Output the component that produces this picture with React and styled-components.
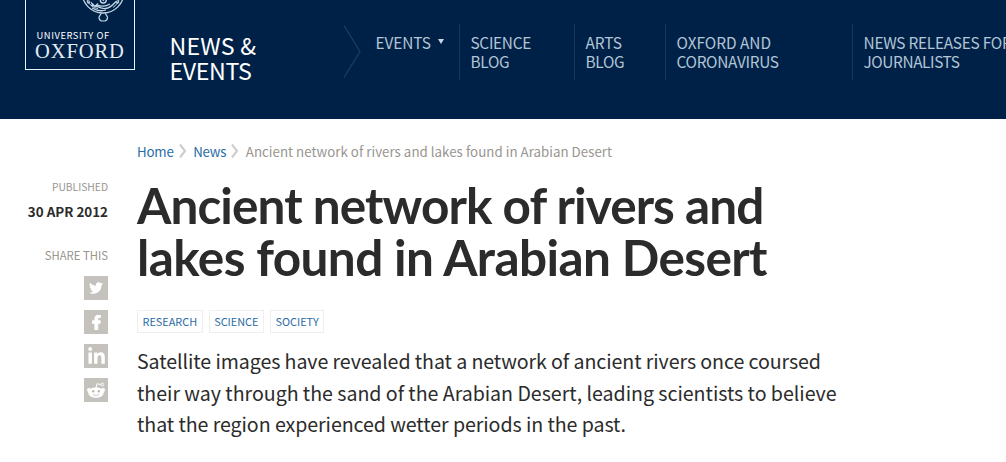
import React from 'react';
import styled, { createGlobalStyle } from 'styled-components';
import { FaTwitter, FaFacebookF, FaLinkedinIn } from 'react-icons/fa';

const Global = createGlobalStyle`
  *, *::before, *::after { box-sizing: border-box; }
  html, body { margin: 0; padding: 0; background: #fff; overflow: hidden; }
  body {
    font-family: "Noto Sans CJK JP", "Open Sans", sans-serif;
    color: #2b2b2b;
  }
  h1, h2, p { margin: 0; padding: 0; }
  a { text-decoration: none; color: inherit; }
`;

const Page = styled.div`
  width: 1006px;
  height: 462px;
  overflow: hidden;
`;

const Header = styled.header`
  display: flex;
  align-items: flex-start;
  height: 119px;
  padding-left: 25px;
  background: #002147;
  color: #fff;
`;

const Logo = styled.a`
  flex: none;
  display: flex;
  flex-direction: column;
  width: 110px;
  height: 70px;
  border: 1px solid #e9f1f7;
  border-top: 0;
`;

const Crest = styled.svg`
  display: block;
  width: 108px;
  height: 25px;
`;

const LogoSmall = styled.span`
  margin: 3px 0 0 10.5px;
  font-size: 9.4px;
  line-height: 14px;
  letter-spacing: 0.55px;
  white-space: nowrap;
`;

const LogoLarge = styled.span`
  margin-left: 9px;
  font-family: "Liberation Serif", serif;
  font-size: 20.5px;
  line-height: 18px;
  letter-spacing: 0.9px;
  color: #e3edf4;
  white-space: nowrap;
`;

const SectionTitle = styled.h2`
  flex: none;
  width: 173px;
  margin: 33px 0 0 34.5px;
  font-size: 23.2px;
  line-height: 25px;
  font-weight: 400;
`;

const NavChevron = styled.svg`
  flex: none;
  width: 20px;
  height: 56px;
  margin-top: 24px;
`;

const Nav = styled.nav`
  display: flex;
  margin: 24px 0 0 1.5px;
  height: 56px;
`;

const NavItem = styled.a`
  flex: none;
  width: ${(p) => p.$width}px;
  padding: 9px 0 0 10.5px;
  border-left: 1px solid ${(p) => (p.$first ? 'transparent' : '#16365a')};
  color: #b3c5d6;
  font-size: 15.4px;
  line-height: 19px;
  white-space: nowrap;
`;

const Caret = styled.i`
  display: inline-block;
  margin-left: 7px;
  vertical-align: 5px;
  border: 3.5px solid transparent;
  border-top: 5px solid #c8d6e2;
  border-bottom: 0;
`;

const Body = styled.main`
  display: flex;
`;

const Aside = styled.aside`
  flex: none;
  display: flex;
  flex-direction: column;
  align-items: flex-end;
  width: 108px;
  padding-top: 60px;
`;

const MetaLabel = styled.span`
  margin-top: ${(p) => p.$top || 0}px;
  font-size: ${(p) => p.$size}px;
  line-height: 16px;
  color: #99958f;
  white-space: nowrap;
`;

const MetaDate = styled.span`
  margin-top: 7px;
  font-size: 13.4px;
  line-height: 18px;
  font-weight: 700;
  white-space: nowrap;
`;

const ShareList = styled.div`
  display: grid;
  gap: 10px;
  margin-top: 13px;
`;

const ShareButton = styled.a`
  display: flex;
  align-items: center;
  justify-content: center;
  width: 24px;
  height: 24px;
  background: #c5c1bd;
  color: #fff;
`;

const Article = styled.article`
  margin-left: 29px;
  padding-top: 23px;
`;

const Breadcrumb = styled.nav`
  display: flex;
  height: 20px;
  font-size: 13.3px;
  line-height: 20px;
  white-space: nowrap;
`;

const Crumb = styled.a`
  letter-spacing: ${(p) => (p.$current ? 0.03 : -0.2)}px;
  color: ${(p) => (p.$current ? '#99958f' : '#2a6ca5')};
`;

const CrumbChevron = styled.svg`
  width: 9px;
  height: 14px;
  margin: 2px 6.5px 0 4px;
`;

const Headline = styled.h1`
  margin-top: 17px;
  font-family: "Lato", sans-serif;
  font-size: 49.5px;
  line-height: 52px;
  font-weight: 700;
  white-space: nowrap;
`;

const Line = styled.span`
  display: block;
  width: max-content;
  letter-spacing: ${(p) => p.$track || 0}px;
`;

const Tags = styled.div`
  display: flex;
  gap: 6px;
  margin-top: 27px;
`;

const Tag = styled.a`
  height: 23px;
  padding: 0 4.5px;
  border: 1px solid #f1efed;
  font-size: 10.9px;
  line-height: 21px;
  color: #2a6ca5;
  white-space: nowrap;
`;

const Intro = styled.p`
  margin-top: 12px;
  font-size: 19.6px;
  line-height: 31.5px;
  white-space: nowrap;
`;

const NAV = [
  { lines: ['EVENTS'], width: 95, caret: true, tracks: [-0.1] },
  { lines: ['SCIENCE', 'BLOG'], width: 115, tracks: [-0.3, -0.3] },
  { lines: ['ARTS', 'BLOG'], width: 91, tracks: [-0.1, -0.3] },
  { lines: ['OXFORD AND', 'CORONAVIRUS'], width: 187, tracks: [0, -0.3] },
  { lines: ['NEWS RELEASES FOR', 'JOURNALISTS'], width: 180, tracks: [-0.25, -0.4] },
];

function CrestArt() {
  return (
    <Crest viewBox="0 0 108 25" fill="none" stroke="#c3d6e6">
      <circle cx="77" cy="-8" r="21" strokeWidth="1.3" />
      <path d="M61 0q4 8 11 8.500" strokeWidth="1" />
      <path d="M93 0q-2 5-6 7.500" strokeWidth="1" />
      <path d="M65 5.500c5-1 9 3.500 14 3 5 0 7-3 11-7M66 8c5 3 9 3.500 14 2M65 2.500l4 4 3-3M71 5c4 1.500 9 1.500 13-1" strokeWidth="1.3" />
      <circle cx="77.300" cy="0" r="3" strokeWidth="1.4" />
      <circle cx="77.300" cy="0" r="1" fill="#c3d6e6" stroke="none" />
      <circle cx="62.5" cy="2" r="1.3" />
      <circle cx="91.5" cy="2" r="1.3" />
      <path d="M75 13c.5 1.500-2 2.500-2 4.500 0 2 1 3 2.500 3.500h3.500c1.500-.5 2.500-1.500 2.500-3.500 0-2-2.500-3-2-4.500" strokeWidth="1.2" />
    </Crest>
  );
}

function CrumbArrow() {
  return (
    <CrumbChevron viewBox="0 0 9 14" fill="none" stroke="#d0cecd" strokeWidth="2.2">
      <path d="M2 .5 7 7l-5 6.500" />
    </CrumbChevron>
  );
}

function RedditIcon() {
  return (
    <svg width="20" height="18" viewBox="0 0 20 18">
      <path d="M10 7 11 2.700l4.200 1" fill="none" stroke="#fff" strokeWidth="1" />
      <circle cx="16.3" cy="3.5" r="1.4" fill="none" stroke="#fff" strokeWidth=".9" />
      <circle cx="3" cy="9" r="2" fill="#fff" />
      <circle cx="17" cy="9" r="2" fill="#fff" />
      <ellipse cx="10" cy="11.5" rx="7.8" ry="5.3" fill="#fff" />
      <circle cx="7.2" cy="10.3" r="1.2" fill="#bdb8b3" />
      <circle cx="12.8" cy="10.3" r="1.2" fill="#bdb8b3" />
      <path d="M6.800 13.500q3.200 2 6.400 0" fill="none" stroke="#c5c1bd" strokeWidth=".8" />
    </svg>
  );
}

export default function App() {
  return (
    <Page>
      <Global />
      <Header>
        <Logo href="#">
          <CrestArt />
          <LogoSmall>UNIVERSITY OF</LogoSmall>
          <LogoLarge>OXFORD</LogoLarge>
        </Logo>
        <SectionTitle>
          <Line $track={0.2}>NEWS &amp;</Line>
          <Line $track={-0.35}>EVENTS</Line>
        </SectionTitle>
        <NavChevron viewBox="0 0 20 56" fill="none" stroke="#1c3c60" strokeWidth="1.3">
          <path d="M1 1.500 17 27.500 1 53.500" />
        </NavChevron>
        <Nav>
          {NAV.map((item, i) => (
            <NavItem key={item.lines.join(' ')} href="#" $width={item.width} $first={i === 0}>
              {item.lines.map((l, j) => (
                <Line key={l} $track={item.tracks[j]}>
                  {l}
                  {item.caret && <Caret />}
                </Line>
              ))}
            </NavItem>
          ))}
        </Nav>
      </Header>
      <Body>
        <Aside>
          <MetaLabel $size={10.3}>PUBLISHED</MetaLabel>
          <MetaDate>30 APR 2012</MetaDate>
          <MetaLabel $size={11.3} $top={27}>SHARE THIS</MetaLabel>
          <ShareList>
            <ShareButton href="#"><FaTwitter size={14} /></ShareButton>
            <ShareButton href="#">
              <FaFacebookF size={15} strokeWidth={30} stroke="#fff" />
            </ShareButton>
            <ShareButton href="#"><FaLinkedinIn size={19} /></ShareButton>
            <ShareButton href="#"><RedditIcon /></ShareButton>
          </ShareList>
        </Aside>
        <Article>
          <Breadcrumb>
            <Crumb href="#">Home</Crumb>
            <CrumbArrow />
            <Crumb href="#">News</Crumb>
            <CrumbArrow />
            <Crumb $current>Ancient network of rivers and lakes found in Arabian Desert</Crumb>
          </Breadcrumb>
          <Headline>
            <Line $track={-0.92}>Ancient network of rivers and</Line>
            <Line $track={-0.6}>lakes found in Arabian Desert</Line>
          </Headline>
          <Tags>
            <Tag href="#">RESEARCH</Tag>
            <Tag href="#">SCIENCE</Tag>
            <Tag href="#">SOCIETY</Tag>
          </Tags>
          <Intro>
            <Line $track={-0.08}>Satellite images have revealed that a network of ancient rivers once coursed</Line>
            <Line $track={-0.03}>their way through the sand of the Arabian Desert, leading scientists to believe</Line>
            <Line $track={-0.07}>that the region experienced wetter periods in the past.</Line>
          </Intro>
        </Article>
      </Body>
    </Page>
  );
}
